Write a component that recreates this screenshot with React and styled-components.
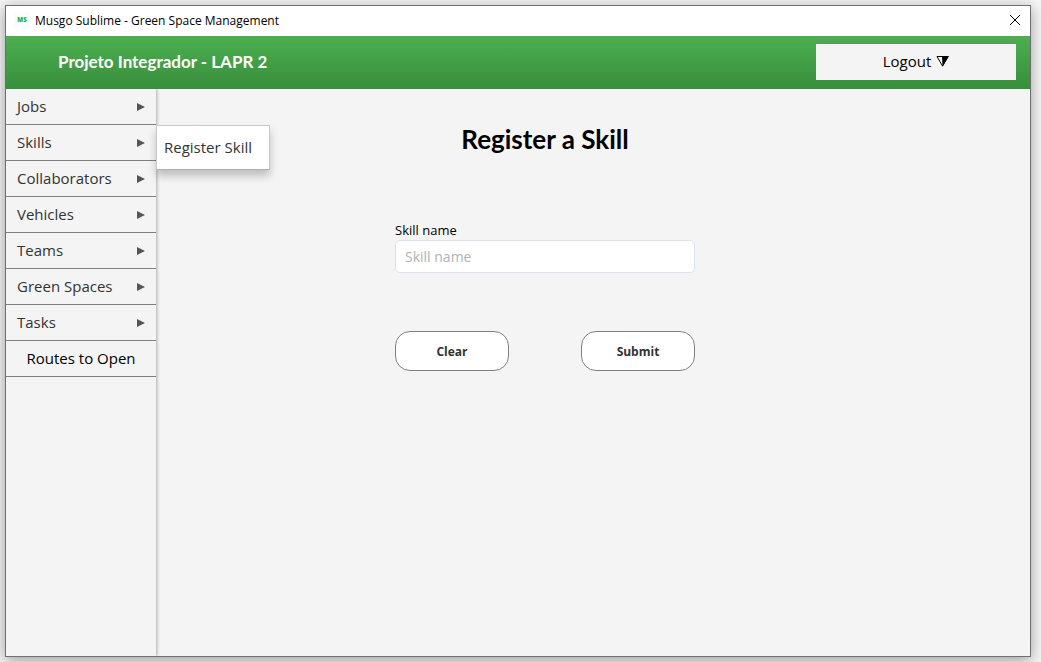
import React from "react";
import styled, { createGlobalStyle } from "styled-components";

const Global = createGlobalStyle`
  *, *::before, *::after { box-sizing: border-box; }
  body {
    margin: 0;
    background: #f6f6f6;
    color: #000;
    font-family: "Open Sans", "Noto Sans", sans-serif;
  }
  button, input { font-family: inherit; }
`;

const Desktop = styled.div`
  display: flex;
  min-height: 100vh;
  padding: 5px 10px 5px 5px;
`;

const Window = styled.div`
  flex: 1;
  display: flex;
  flex-direction: column;
  border: 1px solid #707070;
  background: #f4f4f4;
  box-shadow: 0 3px 14px rgba(0, 0, 0, 0.38);
`;

const TitleBar = styled.div`
  display: flex;
  align-items: center;
  height: 30px;
  padding: 0 8px 2px;
  background: #fff;
  font-size: 12px;
`;

const AppIcon = styled.span`
  width: 16px;
  margin-right: 5px;
  background: #fcfcfc;
  color: #1fb13f;
  font-size: 6px;
  font-weight: 800;
  line-height: 16px;
  text-align: center;
`;

const WindowTitle = styled.span`
  flex: 1;
`;

const CloseButton = styled.button`
  display: flex;
  padding: 2px;
  border: 0;
  background: none;
`;

const Header = styled.header`
  display: flex;
  align-items: center;
  justify-content: space-between;
  height: 53px;
  padding: 0 14px 2px 52px;
  background: linear-gradient(#4caf50, #388e3c);
`;

const Brand = styled.span`
  color: #fff;
  font-family: Lato, sans-serif;
  font-size: 17px;
  font-weight: 700;
`;

const LogoutButton = styled.button`
  display: flex;
  align-items: center;
  justify-content: center;
  gap: 5px;
  width: 200px;
  height: 37px;
  padding: 0 0 2px;
  border: 0;
  border-top: 1px solid #808080;
  background: #f4f4f4;
  color: #000;
  font-size: 15px;
`;

const Body = styled.div`
  flex: 1;
  display: flex;
`;

const Sidebar = styled.nav`
  position: relative;
  width: 150px;
  background: #f4f4f4;
  box-shadow: 1px 0 3px rgba(0, 0, 0, 0.3);
  clip-path: inset(0 -200px 0 0);
`;

const MenuList = styled.ul`
  margin: 0;
  padding: 0;
  list-style: none;
`;

const MenuItem = styled.li`
  position: relative;
  border-bottom: 1px solid #808080;
`;

const MenuButton = styled.button`
  display: flex;
  align-items: center;
  justify-content: ${(p) => (p.$plain ? "center" : "space-between")};
  width: 100%;
  height: 35px;
  padding: 0 11px;
  border: 0;
  background: none;
  color: ${(p) => (p.$plain ? "#000" : "#333")};
  font-size: 15px;
`;

const MenuLabel = styled.span`
  padding-bottom: 2px;
`;

const Submenu = styled.div`
  position: absolute;
  top: 0;
  left: 100%;
  z-index: 1;
  border: 1px solid #c8c8c8;
  border-bottom-color: #b0b0b0;
  background: #fff;
  box-shadow: 0 6px 8px rgba(0, 0, 0, 0.22);
`;

const SubmenuButton = styled.button`
  width: 112px;
  height: 43px;
  padding: 0 7px 2px;
  border: 0;
  background: none;
  color: #333;
  font-size: 15px;
  text-align: left;
  white-space: nowrap;
`;

const Main = styled.main`
  flex: 1;
  display: flex;
  flex-direction: column;
  align-items: center;
  padding: 32px 96px 0 0;
`;

const Heading = styled.h1`
  margin: 0;
  font-family: Lato, sans-serif;
  font-size: 26px;
  font-weight: 700;
  line-height: 36px;
`;

const Form = styled.form`
  display: flex;
  flex-direction: column;
  width: 300px;
  margin-top: 63px;
`;

const Label = styled.label`
  font-size: 13px;
  line-height: 20px;
`;

const TextInput = styled.input`
  height: 33px;
  padding: 0 9px;
  border: 1px solid #dde2f0;
  border-radius: 5px;
  background: #fff;
  font-size: 14px;
  &::placeholder { color: #b2b2b2; }
`;

const Actions = styled.div`
  display: flex;
  justify-content: space-between;
  margin-top: 58px;
`;

const ActionButton = styled.button`
  width: 114px;
  height: 40px;
  padding: 0;
  border: 1px solid #808080;
  border-radius: 15px;
  background: #fff;
  color: #333;
  font-size: 12px;
  font-weight: 700;
`;

const MENU = [
  { label: "Jobs" },
  { label: "Skills", submenu: "Register Skill" },
  { label: "Collaborators" },
  { label: "Vehicles" },
  { label: "Teams" },
  { label: "Green Spaces" },
  { label: "Tasks" },
  { label: "Routes to Open", plain: true },
];

const Arrow = () => (
  <svg width="8" height="8" viewBox="0 0 8 8" aria-hidden="true">
    <path d="M0 0L8 4L0 8Z" fill="#555" />
  </svg>
);

export default function App() {
  return (
    <Desktop>
      <Global />
      <Window>
        <TitleBar>
          <AppIcon>MS</AppIcon>
          <WindowTitle>Musgo Sublime - Green Space Management</WindowTitle>
          <CloseButton aria-label="Close">
            <svg width="10" height="10" viewBox="0 0 10 10" stroke="#000">
              <path d="M0 0L10 10M10 0L0 10" />
            </svg>
          </CloseButton>
        </TitleBar>
        <Header>
          <Brand>Projeto Integrador - LAPR 2</Brand>
          <LogoutButton>
            Logout
            <svg width="13" height="11" viewBox="0 0 13 11" aria-hidden="true">
              <path d="M1 .5H12L6.5 10Z" fill="none" stroke="#000" />
              <path d="M6 0H13L6.5 11Z" />
            </svg>
          </LogoutButton>
        </Header>
        <Body>
          <Sidebar>
            <MenuList>
              {MENU.map(({ label, submenu, plain }) => (
                <MenuItem key={label}>
                  <MenuButton $plain={plain}>
                    <MenuLabel>{label}</MenuLabel>
                    {!plain && <Arrow />}
                  </MenuButton>
                  {submenu && (
                    <Submenu>
                      <SubmenuButton>{submenu}</SubmenuButton>
                    </Submenu>
                  )}
                </MenuItem>
              ))}
            </MenuList>
          </Sidebar>
          <Main>
            <Heading>Register a Skill</Heading>
            <Form onSubmit={(e) => e.preventDefault()}>
              <Label htmlFor="skill-name">Skill name</Label>
              <TextInput id="skill-name" placeholder="Skill name" />
              <Actions>
                <ActionButton type="reset">Clear</ActionButton>
                <ActionButton type="submit">Submit</ActionButton>
              </Actions>
            </Form>
          </Main>
        </Body>
      </Window>
    </Desktop>
  );
}
